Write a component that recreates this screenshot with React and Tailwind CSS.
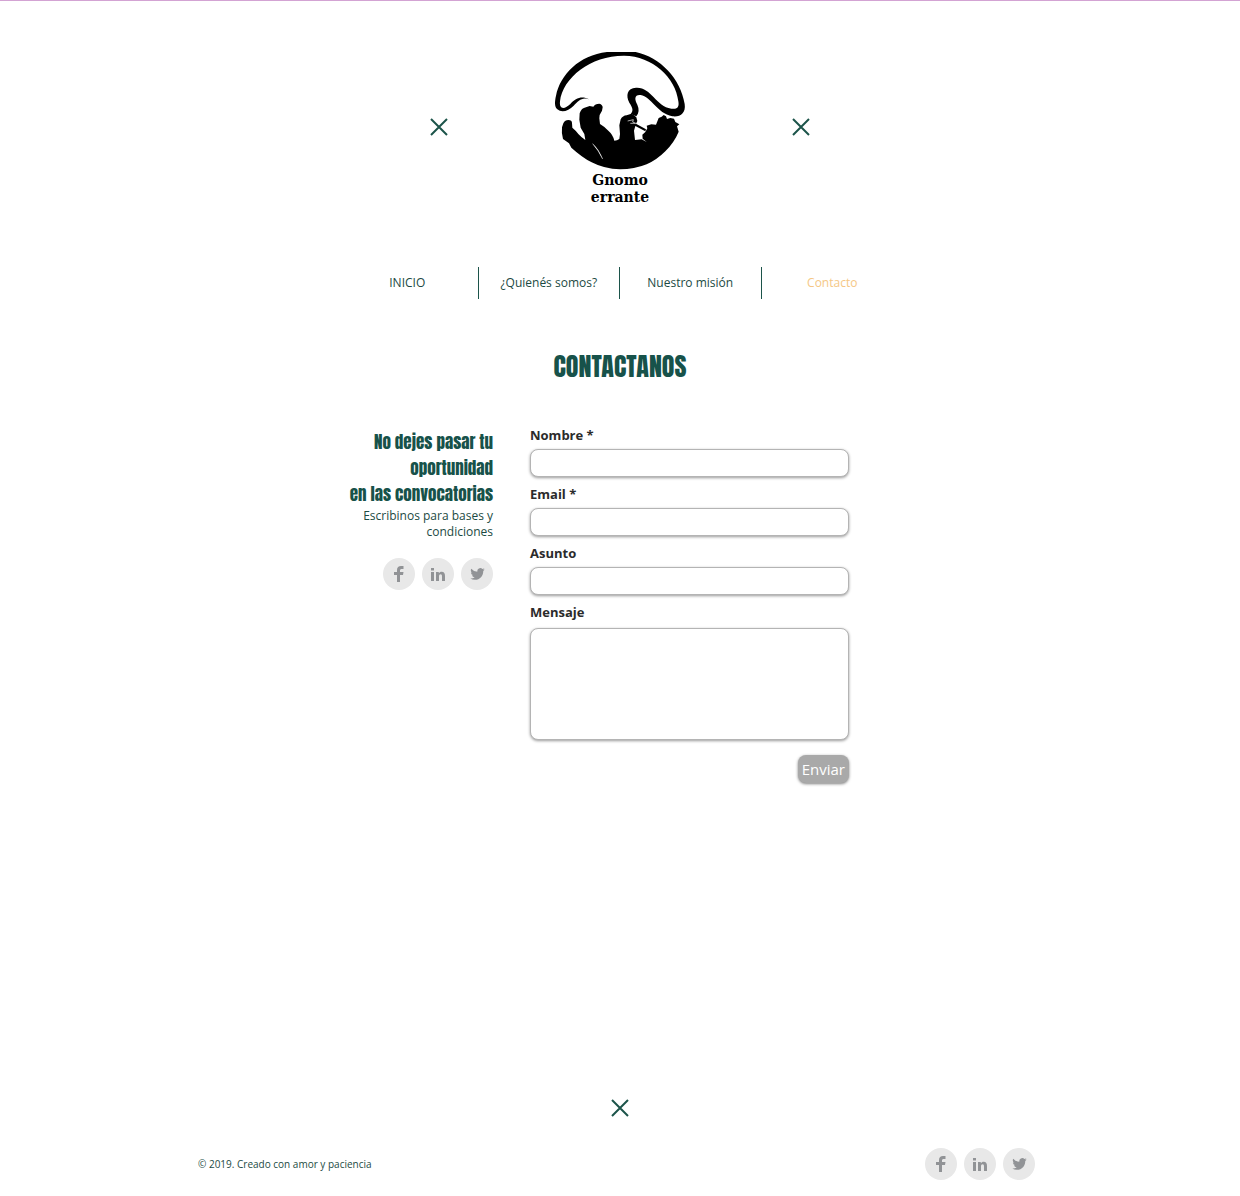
import React from "react";

function Cross() {
  return (
    <svg viewBox="0 0 18 18" className="size-[18px] text-[#1c544a]" fill="none" stroke="currentColor" strokeWidth="2" aria-hidden="true">
      <path d="M1 1 17 17M17 1 1 17" />
    </svg>
  );
}

function Logo() {
  return (
    <a href="#inicio" className="flex flex-col items-center text-black">
      <svg viewBox="42 36 396 354" className="h-[118px] w-[132px]" fill="currentColor" aria-hidden="true">
        <path d="M147 178C125 170 115 184 101 197C86 212 66 220 52 208C43 200 44 184 48 167C61 104 117 46 201 36L287 36C361 52 422 116 434 192C438 219 421 232 397 229C351 220 333 169 302 165C283 163 283 177 292 194C298 207 297 219 289 229L272 222C281 211 278 204 268 188C257 166 261 145 288 143C333 140 347 198 394 206C413 209 418 201 415 184C407 112 337 48 253 47C153 46 68 113 60 184C57 211 76 207 91 192C106 176 124 166 147 178Z" />
        <path d="M70 250Q75 240 85 240Q96 240 96 249L97 263Q108 272 115 282Q125 293 136 300L133 282L122 263L118 239L119 220Q124 204 138 202L149 198L160 200Q165 191 178 191Q188 194 188 202L186 212Q177 224 178 235L180 252Q195 261 205 272Q219 284 223 302L231 301L238 297L240 282L238 256L242 238Q248 227 260 226L274 221L282 226L289 232L292 243L288 251L318 268L316 274L286 258L282 272L285 300L305 298L320 306L308 296L307 284L316 276L322 265L320 257L334 253L348 254L356 234L365 230L371 225L378 229L381 237L391 234L402 236L406 246L418 253L411 259L416 275Q404 305 376 334Q350 360 320 373Q283 388 240 388Q193 387 155 367Q126 352 94 323L87 310L69 297Q64 277 66 262Z" />
        <path d="M263 243 280 239 278 246 287 250 271 250" fill="none" stroke="white" strokeWidth="2" />
        <path d="M158 311 Q177 328 188 357 Q175 331 158 311Z" fill="white" stroke="white" strokeWidth="1" />
      </svg>
      <span className="mt-0.5 text-center font-['DejaVu_Serif',serif] text-sm/[17px] font-bold">
        Gnomo
        <br />
        errante
      </span>
    </a>
  );
}

const networks = [
  {
    name: "Facebook",
    box: "0 0 10 16",
    size: "h-4 w-[10px]",
    path: "M3 16V9H0V6h3V4C3 1.200 4.500 0 7 0h2.500v3H8C6.500 3 6 3.500 6 4.500V6h3.500L9 9H6v7Z",
  },
  {
    name: "LinkedIn",
    box: "0 0 14 13",
    size: "h-[13px] w-[14px]",
    path: "M0 4h3v9H0ZM0 0h3v2.600H0ZM5 4h2.800v1.300C8.400 4.300 9.400 3.700 10.600 3.700 13.200 3.700 14 5.400 14 8v5h-3V8.500C11 7 10.600 6.300 9.600 6.300 8.500 6.300 8 7.100 8 8.500V13H5Z",
  },
  {
    name: "Twitter",
    box: "0 2 24 20",
    size: "h-3 w-[15px]",
    path: "M24 4.560a9.830 9.830 0 0 1-2.830.780 4.930 4.930 0 0 0 2.170-2.720 9.860 9.860 0 0 1-3.130 1.190A4.920 4.920 0 0 0 11.820 8.300 13.980 13.980 0 0 1 1.670 3.150a4.930 4.930 0 0 0 1.520 6.570A4.900 4.900 0 0 1 .960 9.110v.060a4.920 4.920 0 0 0 3.950 4.830 4.940 4.940 0 0 1-2.220.080 4.920 4.920 0 0 0 4.600 3.420A9.870 9.870 0 0 1 0 19.540a13.930 13.930 0 0 0 7.550 2.210c9.140 0 14.310-7.720 13.990-14.640A10.020 10.020 0 0 0 24 4.560Z",
  },
];

function Social() {
  return (
    <div className="flex justify-end gap-[7px]">
      {networks.map((n) => (
        <a key={n.name} href={"#" + n.name} aria-label={n.name} className="flex size-8 items-center justify-center rounded-full bg-[#e8e8e8] text-[#919396]">
          <svg viewBox={n.box} className={n.size} fill="currentColor" aria-hidden="true">
            <path d={n.path} />
          </svg>
        </a>
      ))}
    </div>
  );
}

function Field({ id, label, type = "text" }) {
  return (
    <div className="flex flex-col gap-1">
      <label htmlFor={id} className="text-[13px]/5 font-bold">{label}</label>
      <input id={id} type={type} className="h-7 w-full rounded-lg border border-[#b4b4b4] bg-white px-2 shadow-[0_1px_3px_rgba(0,0,0,0.4)]" />
    </div>
  );
}

export default function App() {
  return (
    <div className="flex flex-col items-center border-t border-[#d3a3d3] bg-white font-['Open_Sans',sans-serif] text-[#1c4a43]">
      <header className="flex w-full flex-col items-center pt-[51px]">
        <div className="flex w-full max-w-[380px] items-start justify-between">
          <div className="pt-[66px]"><Cross /></div>
          <Logo />
          <div className="pt-[66px]"><Cross /></div>
        </div>
        <nav className="mt-[61px] grid w-full max-w-[566px] grid-cols-4 divide-x divide-[#1c544a] text-center text-xs/8">
          <a href="#inicio">INICIO</a>
          <a href="#quienes">¿Quienés somos?</a>
          <a href="#mision">Nuestro misión</a>
          <a href="#contacto" aria-current="page" className="text-[#f5c785]">Contacto</a>
        </nav>
      </header>

      <main className="flex w-full max-w-[564px] flex-col">
        <h1 className="mt-[47px] text-center font-['Anton',sans-serif] text-[26px]/10 font-normal text-[#17524a]">CONTACTANOS</h1>
        <div className="mt-[39px] flex gap-[37px]">
          <section className="w-[155px] shrink-0 pt-1 text-right">
            <h2 className="font-['Anton',sans-serif] text-[17px]/[26px] font-normal text-[#17524a]">
              No dejes pasar tu oportunidad
              <br />
              en las convocatorias
            </h2>
            <p className="mt-px mb-[18px] text-xs/4">Escribinos para bases y condiciones</p>
            <Social />
          </section>
          <form className="flex flex-1 flex-col gap-[7px] pr-[53px] text-[#2b2b2b]" onSubmit={(e) => e.preventDefault()}>
            <Field id="nombre" label="Nombre *" />
            <Field id="email" label="Email *" type="email" />
            <Field id="asunto" label="Asunto" />
            <div className="flex flex-col gap-[6px]">
              <label htmlFor="mensaje" className="text-[13px]/5 font-bold">Mensaje</label>
              <textarea id="mensaje" className="h-28 w-full resize-none rounded-lg border border-[#b4b4b4] bg-white p-2 shadow-[0_1px_3px_rgba(0,0,0,0.4)]" />
            </div>
            <button type="submit" className="mt-2 h-7 self-end rounded-lg bg-[#a9a9a9] px-1 text-[15px] text-white shadow-[0_1px_3px_rgba(0,0,0,0.5)]">Enviar</button>
          </form>
        </div>
      </main>

      <footer className="mt-[316px] flex w-full max-w-[844px] flex-col items-center pb-4">
        <Cross />
        <div className="mt-[31px] flex w-full items-center justify-between pr-[7px]">
          <p className="text-[10px]/4">© 2019. Creado con amor y paciencia</p>
          <Social />
        </div>
      </footer>
    </div>
  );
}
